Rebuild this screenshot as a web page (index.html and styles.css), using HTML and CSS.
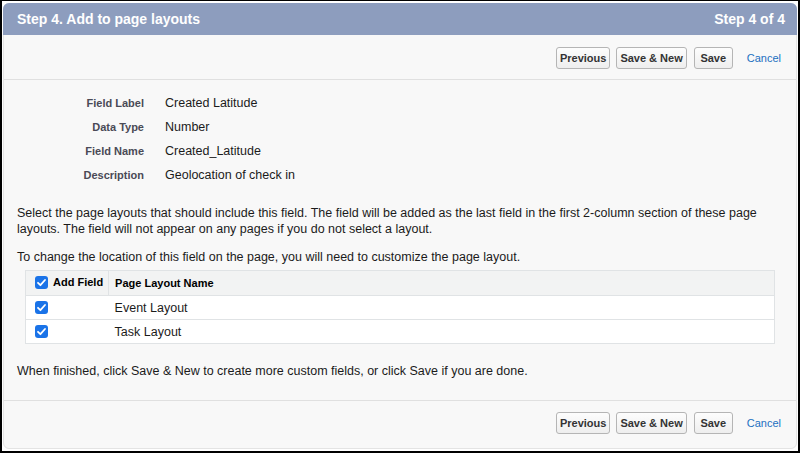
FILE: index.html
```html
<!DOCTYPE html>
<html lang="en">
<head>
    <meta charset="UTF-8">
    <title>New Custom Field</title>
    <link rel="stylesheet" href="styles.css">
</head>
<body>
    <div class="frame">
        <div class="panel">
            <div class="panel-header">
                <h2>Step 4. Add to page layouts</h2>
                <span class="step">Step 4 of 4</span>
            </div>

            <div class="btn-row top">
                <button class="btn">Previous</button>
                <button class="btn">Save &amp; New</button>
                <button class="btn btn-save">Save</button>
                <a href="#" class="cancel">Cancel</a>
            </div>

            <div class="panel-body">
                <table class="detail">
                    <tr><th>Field Label</th><td>Created Latitude</td></tr>
                    <tr><th>Data Type</th><td>Number</td></tr>
                    <tr><th>Field Name</th><td>Created_Latitude</td></tr>
                    <tr><th>Description</th><td>Geolocation of check in</td></tr>
                </table>

                <p class="intro">Select the page layouts that should include this field. The field will be added as the last field in the first 2-column section of these page layouts. The field will not appear on any pages if you do not select a layout.</p>
                <p>To change the location of this field on the page, you will need to customize the page layout.</p>

                <table class="layouts">
                    <thead>
                        <tr>
                            <th class="col-add"><span class="check"></span>Add Field</th>
                            <th>Page Layout Name</th>
                        </tr>
                    </thead>
                    <tbody>
                        <tr><td class="col-add"><span class="check"></span></td><td>Event Layout</td></tr>
                        <tr><td class="col-add"><span class="check"></span></td><td>Task Layout</td></tr>
                    </tbody>
                </table>

                <p class="done">When finished, click Save &amp; New to create more custom fields, or click Save if you are done.</p>
            </div>

            <div class="btn-row bottom">
                <button class="btn">Previous</button>
                <button class="btn">Save &amp; New</button>
                <button class="btn btn-save">Save</button>
                <a href="#" class="cancel">Cancel</a>
            </div>
        </div>
    </div>
</body>
</html>
```
FILE: styles.css
```css
html, body {
    margin: 0;
    height: 100%;
}
body {
    font-family: "Liberation Sans", Arial, sans-serif;
    font-size: 12.5px;
    color: #1b1b1b;
    background: #fff;
}
.frame {
    box-sizing: border-box;
    height: 453px;
    border: 2px solid #000;
    border-top-width: 1px;
    padding: 2px 1px 2px 1px;
}
.panel {
    box-sizing: border-box;
    height: 100%;
    background: #f8f8f8;
    border: 1px solid #e4e4e4;
    border-radius: 6px;
    display: flex;
    flex-direction: column;
}
.panel-header {
    display: flex;
    justify-content: space-between;
    align-items: center;
    flex-shrink: 0;
    height: 32px;
    margin: -1px -1px 0;
    padding: 0 12px 0 14px;
    background: #8d9dbe;
    color: #fff;
    border-radius: 6px 6px 0 0;
}
.panel-header h2 {
    margin: 0;
    font-size: 14px;
    font-weight: bold;
}
.step {
    font-size: 14px;
    font-weight: bold;
}
.btn-row {
    box-sizing: border-box;
    display: flex;
    justify-content: flex-end;
    align-items: center;
    flex-shrink: 0;
    gap: 6px;
    padding: 2px 15px 0;
    height: 45px;
}
.btn-row.top {
    border-bottom: 1px solid #e0e0e0;
}
.btn-row.bottom {
    border-top: 1px solid #e0e0e0;
    margin-top: auto;
    height: 48px;
    padding: 0 15px 3px;
}
.btn {
    font-family: inherit;
    font-size: 11px;
    font-weight: bold;
    color: #333;
    height: 22px;
    padding: 0 3px;
    background: linear-gradient(#fdfdfd, #eeeeee);
    border: 1px solid #b5b5b5;
    border-radius: 3px;
    cursor: pointer;
}
.btn-save {
    min-width: 39px;
    margin-left: 1px;
}
.cancel {
    margin-left: 8px;
    color: #1b6fc1;
    text-decoration: none;
    font-size: 11px;
}
.panel-body {
    padding: 11px 13px 0;
}
.detail {
    border-collapse: collapse;
    margin-bottom: 18px;
}
.detail th {
    width: 127px;
    text-align: right;
    font-size: 11px;
    font-weight: bold;
    color: #4a4a56;
    padding: 5px 21px 5px 0;
}
.detail td {
    padding: 5px 0;
}
.panel-body p {
    margin: 0 0 12px;
    line-height: 16px;
}
.panel-body p + p {
    margin-bottom: 5px;
}
.layouts {
    width: calc(100% - 16px);
    margin: 0 8px 0;
    border-collapse: collapse;
    background: #fff;
    border: 1px solid #e0e3e5;
}
.layouts th,
.layouts td {
    text-align: left;
    padding: 0 6px;
    height: 23px;
    border-bottom: 1px solid #e0e3e5;
}
.layouts th {
    height: 24px;
    background: #f2f3f3;
    font-size: 11px;
    font-weight: bold;
    color: #000;
}
.layouts th.col-add {
    border-right: 1px solid #e0e3e5;
    white-space: nowrap;
}
.col-add {
    width: 68px;
    padding-left: 9px !important;
    padding-right: 5px !important;
}
.check {
    display: inline-block;
    vertical-align: middle;
    width: 13px;
    height: 13px;
    margin-right: 5px;
    border-radius: 3px;
    background: #1a73e8 url("data:image/svg+xml,%3Csvg xmlns='http://www.w3.org/2000/svg' viewBox='0 0 13 13'%3E%3Cpath d='M3 6.8l2.4 2.4L10 4' fill='none' stroke='white' stroke-width='1.8' stroke-linecap='round' stroke-linejoin='round'/%3E%3C/svg%3E") no-repeat center;
    position: relative;
    top: -1px;
}
.panel-body p.done {
    margin-top: 19px;
}
```
